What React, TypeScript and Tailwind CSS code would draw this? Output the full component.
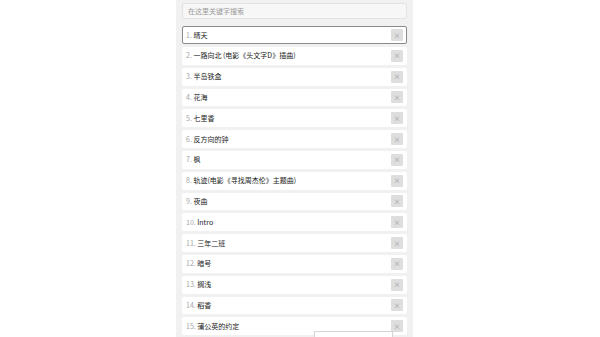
const songs = [
  "晴天",
  "一路向北 (电影《头文字D》插曲)",
  "半岛铁盒",
  "花海",
  "七里香",
  "反方向的钟",
  "枫",
  "轨迹(电影《寻找周杰伦》主题曲)",
  "夜曲",
  "Intro",
  "三年二班",
  "暗号",
  "搁浅",
  "稻香",
  "蒲公英的约定",
];

export default function App() {
  return (
    <div
      className="relative h-[337px] overflow-hidden bg-white"
      style={{ fontFamily: '"Noto Sans CJK SC", "Noto Sans", sans-serif' }}
    >
      <div className="ml-[176px] h-full w-[237px] bg-[#f1f1f1] px-[6px] pt-[3px]">
        <div className="flex h-[16px] items-center rounded-[2px] border border-[#e3e3e3] bg-[#f7f7f7] px-[5px] text-[7px] text-[#999]">
          在这里关键字搜索
        </div>

        <ul className="mt-[7px] flex flex-col gap-[3px]">
          {songs.map((title, index) => (
            <li
              key={index}
              className={
                index === 0
                  ? "flex h-[18px] items-center justify-between rounded-[2px] border border-[#8a8a8a] bg-white pl-[3px] pr-[3px]"
                  : "flex h-[17.8px] items-center justify-between rounded-[2px] border border-transparent bg-white pl-[3px] pr-[3px]"
              }
            >
              <span className="text-[7px] leading-none">
                <span className="text-[#a5a5a5]">{index + 1}. </span>
                <span className="text-[#222]">{title}</span>
              </span>
              <span className="flex h-[12px] w-[12px] items-center justify-center rounded-[1px] bg-[#dedede] text-[7px] leading-none text-[#999]">
                ×
              </span>
            </li>
          ))}
        </ul>
      </div>

      <div className="absolute left-[314px] top-[331px] h-[20px] w-[79px] border border-[#d6d6d6] bg-white" />
    </div>
  );
}
